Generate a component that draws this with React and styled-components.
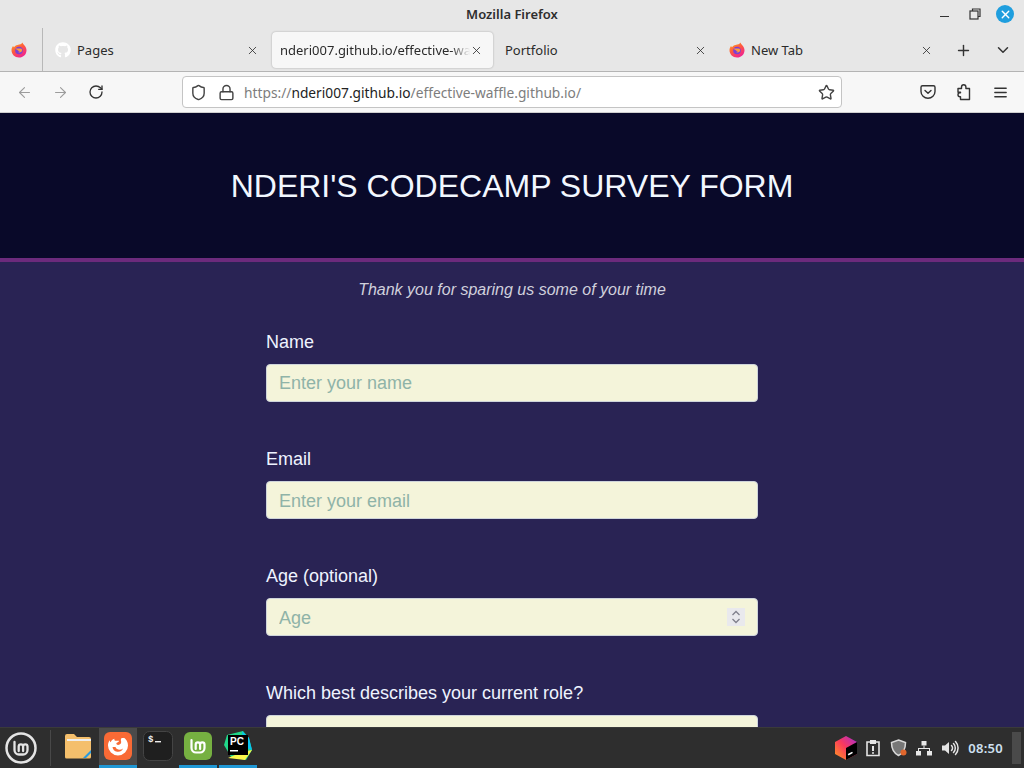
import React from 'react'
import styled, { createGlobalStyle } from 'styled-components'
import { FaGithub } from 'react-icons/fa'
import { LuArrowLeft, LuArrowRight, LuRotateCw, LuShield, LuLock, LuStar, LuPlus, LuChevronDown, LuX, LuMenu } from 'react-icons/lu'

const Global = createGlobalStyle`
  html, body { margin: 0; padding: 0; height: 100%; overflow: hidden; }
  * { box-sizing: border-box; }
`

const Screen = styled.div`
  width: 1024px;
  height: 768px;
  display: flex;
  flex-direction: column;
  overflow: hidden;
  font-family: "Noto Sans", sans-serif;
`

const TitleBar = styled.div`
  height: 28px;
  flex: none;
  background: #e7e7e7;
  display: flex;
  align-items: center;
  justify-content: center;
  position: relative;
  font-size: 13px;
  font-weight: 600;
  color: #2e2e2e;
`

const WindowButtons = styled.div`
  position: absolute;
  right: 10px;
  top: 5px;
  display: flex;
  align-items: center;
  color: #333;
`

const MinimizeBar = styled.div`
  width: 9px;
  height: 1px;
  margin: 5px 20px 0 0;
  background: #333;
`

const CloseDot = styled.div`
  width: 18px;
  height: 18px;
  margin-left: 15px;
  border-radius: 50%;
  background: #1f9ede;
  color: #fff;
  display: flex;
  align-items: center;
  justify-content: center;
`

const TabStrip = styled.div`
  height: 44px;
  flex: none;
  background: #e7e7e7;
  border-bottom: 1px solid #b4b4b4;
  display: flex;
  align-items: flex-start;
`

const PinnedTab = styled.div`
  width: 43px;
  height: 43px;
  flex: none;
  display: flex;
  align-items: center;
  justify-content: center;
  padding-right: 4px;
  padding-top: 1px;
  border-right: 1px solid #b8b8b8;
`

const Tab = styled.div`
  width: ${p => p.$w}px;
  flex: none;
  height: ${p => (p.$active ? 36 : 44)}px;
  margin: ${p => (p.$active ? '4px 0 0 3px' : '0')};
  padding: 0 10px 0 ${p => (p.$active ? 8 : 12)}px;
  display: flex;
  align-items: center;
  gap: ${p => (p.$active ? 0 : 6)}px;
  font-size: 13px;
  color: #2b2b2b;
  background: ${p => (p.$active ? '#f7f7f7' : 'transparent')};
  border-radius: ${p => (p.$active ? '4px' : '0')};
  box-shadow: ${p => (p.$active ? '0 0 2px rgba(0,0,0,.3)' : 'none')};
  svg { flex: none; }
`

const TabLabel = styled.span`
  flex: 1;
  min-width: 0;
  white-space: nowrap;
  mask-image: ${p => (p.$fade ? 'linear-gradient(to right, #000 90%, transparent)' : 'none')};
`

const StripButton = styled.div`
  width: 40px;
  height: 44px;
  flex: none;
  display: flex;
  align-items: center;
  justify-content: center;
  color: #333;
`

const NavBar = styled.div`
  height: 41px;
  flex: none;
  background: #f7f7f7;
  border-bottom: 1px solid #cfcfcf;
  display: flex;
  align-items: center;
  padding: 0 6px;
`

const NavButton = styled.div`
  width: 36px;
  height: 32px;
  flex: none;
  display: flex;
  align-items: center;
  justify-content: center;
  color: ${p => (p.$dim ? '#9c9c9c' : '#333')};
`

const UrlBar = styled.div`
  width: 660px;
  height: 32px;
  margin-left: 68px;
  margin-right: 68px;
  flex: none;
  background: #fff;
  border: 1px solid #c4c4c4;
  border-radius: 4px;
  display: flex;
  align-items: center;
  padding: 0 6px 0 7px;
  gap: 11px;
  color: #444;
  font-size: 13.75px;
`

const UrlText = styled.div`
  flex: 1;
  color: #7d7d7d;
  white-space: nowrap;
  margin-left: -2px;
  b { font-weight: 400; color: #222; }
`

const Page = styled.main`
  flex: 1;
  min-height: 0;
  overflow: hidden;
  background: #292354;
  font-family: "Liberation Sans", Arial, sans-serif;
`

const Header = styled.header`
  height: 149px;
  padding-top: 2px;
  background: #090929;
  border-bottom: 4px solid #6c2a7c;
  display: flex;
  align-items: center;
  justify-content: center;
`

const Title = styled.h1`
  margin: 0;
  font-size: 32px;
  font-weight: 400;
  color: #f2f7ff;
`

const Subtitle = styled.p`
  margin: 19px 0 0;
  text-align: center;
  font-size: 16px;
  line-height: 18px;
  font-style: italic;
  color: #d0d0dc;
`

const Form = styled.form`
  width: 492px;
  margin: 33px auto 0;
  display: flex;
  flex-direction: column;
  gap: 47px;
`

const Field = styled.div`
  display: flex;
  flex-direction: column;
  gap: 12px;
  position: relative;
`

const Label = styled.label`
  font-size: 18px;
  line-height: 20px;
  color: #eef3ff;
`

const Input = styled.input`
  width: 100%;
  height: 38px;
  padding: ${p => (p.$low ? '2px' : '0')} 12px 0;
  font-family: inherit;
  font-size: 18px;
  background: #f4f4da;
  border: 1px solid #ced4da;
  border-radius: 4px;
  outline: none;
  &::placeholder { color: #8fb3a8; opacity: 1; }
`

const SpinBox = styled.div`
  position: absolute;
  right: 13px;
  bottom: 10px;
  width: 18px;
  height: 18px;
  background: #e9e9ed;
  display: flex;
  align-items: center;
  justify-content: center;
`

const Taskbar = styled.div`
  height: 41px;
  flex: none;
  background: #2e2e2e;
  border-top: 1px solid #3a3a3a;
  display: flex;
  align-items: stretch;
`

const MenuButton = styled.div`
  width: 51px;
  flex: none;
  border-right: 1px solid #484848;
  display: flex;
  align-items: center;
  justify-content: center;
  padding-right: 8px;
  margin: 2px 0;
`

const Launcher = styled.div`
  display: flex;
  gap: 2px;
  margin-left: 8px;
`

const Launch = styled.div`
  width: 38px;
  display: flex;
  align-items: center;
  justify-content: center;
  padding-bottom: 1px;
  background: ${p => (p.$active ? '#4a4a4a' : 'transparent')};
  border-bottom: 3px solid ${p => (p.$running ? '#1f97d4' : 'transparent')};
`

const Tray = styled.div`
  margin-left: auto;
  display: flex;
  align-items: center;
  padding-right: 3px;
`

const TraySlot = styled.div`
  width: ${p => p.$w}px;
  display: flex;
  align-items: center;
  justify-content: center;
`

const Clock = styled.div`
  font-size: 13px;
  font-weight: 600;
  color: #cfe0f0;
  margin: 0 9px 0 5px;
  letter-spacing: .3px;
`

const ShowDesktop = styled.div`
  width: 9px;
  height: 32px;
  background: #4a4a4a;
`

const FirefoxLogo = ({ size = 16 }) => (
  <svg width={size} height={size} viewBox="0 0 16 16">
    <defs>
      <linearGradient id="ffa" x1="0" y1="0" x2="0.6" y2="1">
        <stop offset="0" stopColor="#ffb020" />
        <stop offset="0.5" stopColor="#ff5a3c" />
        <stop offset="1" stopColor="#f0258f" />
      </linearGradient>
    </defs>
    <path d="M11.5 .6c.3 1.200 1 1.600 1.800 2.600 1.500 1.700 2.200 3.300 2.200 5 0 4.200-3.300 7.300-7.500 7.300S.5 12.400 .5 8.300c0-1.600.6-3.200 1.500-4.300l1 1.300C3.800 4 5 3.100 6.500 2.900c2.300-.2 4.200-.7 5-2.300z" fill="url(#ffa)" />
    <circle cx="8" cy="8.500" r="3.800" fill="#7b3fd6" />
    <path d="M4.500 6.500h5.500c1.300.4 1.600 2.500.2 3.500-1 .7-2.600.6-3.500-.2 1 .3 2 0 2.400-.7-.8.300-2.400-.2-2.400-1-.8-.2-1.700-.8-2.200-1.600z" fill="#ff9a3c" />
  </svg>
)

const Pocket = () => (
  <svg width="16" height="16" viewBox="0 0 16 16" fill="none" stroke="#333" strokeWidth="1.400" strokeLinecap="round" strokeLinejoin="round">
    <path d="M2.500 1.800h11A1.500 1.500 0 0 1 15 3.300V7.500a7 6.800 0 0 1-14 0V3.300A1.500 1.500 0 0 1 2.500 1.800z" />
    <path d="M5 6.500l3 2.800 3-2.800" />
  </svg>
)

const Extensions = () => (
  <svg width="16" height="18" viewBox="0 0 16 18" fill="none" stroke="#333" strokeWidth="1.400" strokeLinejoin="round">
    <path d="M2 5.500h3.500V4a2.200 2.200 0 0 1 4.400 0v1.500h3.600v11H4.500v-2.800H4a2 2 0 0 1 0-4h.5V9.200H2z" />
  </svg>
)

const Volume = () => (
  <svg width="18" height="18" viewBox="0 0 18 18" fill="none" stroke="#e4e4e4" strokeWidth="1.500" strokeLinecap="round">
    <path d="M1 6.500h3L8 3v12l-4-3.500H1z" fill="#e4e4e4" stroke="none" />
    <path d="M10.500 6.500a3.500 3.500 0 0 1 0 5M12.500 4.500a6.500 6.500 0 0 1 0 9M14.500 2.500a9.500 9.500 0 0 1 0 13" />
  </svg>
)

const MINT_PATH = 'M3.500 4v8a4.500 4.500 0 0 0 4.500 4.500h4a4.500 4.500 0 0 0 4.500-4.500V8.500a2.200 2.200 0 0 0-4.400 0V13M12.100 8.500a2.200 2.200 0 0 0-4.400 0V13'

const Folder = () => (
  <svg width="28" height="26" viewBox="0 0 28 26">
    <path d="M1 3a2 2 0 0 1 2-2h7l3 3h12a2 2 0 0 1 2 2v18a1.500 1.500 0 0 1-1.500 1.500H2.500A1.500 1.500 0 0 1 1 24z" fill="#f4bf6c" />
    <rect x="3" y="6" width="24" height="2" fill="#eee" />
    <path d="M19 25l8-8v3l-5 5z" fill="#2a9be0" />
  </svg>
)

const FirefoxApp = () => (
  <svg width="28" height="28" viewBox="0 0 28 28">
    <rect width="28" height="28" rx="6" fill="#f96a35" />
    <path d="M19 5c3.500 2 5 5 5 8.500a10 10 0 0 1-20 0c0-2 .6-3.800 1.600-5.300.2 1 .6 1.600 1.200 2.100.4-1.700 1.800-3 3.700-3.500-.4 1 0 1.700.8 2h3.700c.2.900-1.400 1.700-2.500 2.300-.5.800.2 1.800 1.700 1.800 2.200 0 3.400-1.800 2.900-3.600-.4-1.500-.7-2.800 2-4.300z" fill="#fff" />
    <path d="M8.500 15a5.500 5.500 0 0 0 10.500 1.500c-2.500 2-6.500 1.600-7.500-1.500z" fill="#f96a35" />
  </svg>
)

const Terminal = () => (
  <svg width="30" height="30" viewBox="0 0 30 30">
    <rect x=".5" y=".5" width="29" height="29" rx="6" fill="#1f1f1f" stroke="#444" />
    <text x="5" y="11" fontSize="9" fontWeight="700" fontFamily="Liberation Mono, monospace" fill="#eee">$</text>
    <rect x="12" y="10" width="6" height="1.400" fill="#eee" />
  </svg>
)

const MintApp = () => (
  <svg width="28" height="28" viewBox="0 0 28 28">
    <rect width="28" height="28" rx="6" fill="#76b041" />
    <g transform="translate(4 4)">
      <path d={MINT_PATH} fill="none" stroke="#fff" strokeWidth="2.200" strokeLinecap="round" />
    </g>
  </svg>
)

const Pycharm = () => (
  <svg width="32" height="32" viewBox="0 0 32 32">
    <path d="M5 5l16-4 6 7 3 12-6 10-15-3-7-12z" fill="#21d789" />
    <path d="M20 1l7 7 3 12-8-3z" fill="#07c3f2" />
    <path d="M6 28l17 2 7-10-10 2z" fill="#fcf84a" />
    <rect x="6" y="5" width="20" height="20" fill="#000" />
    <text x="8" y="15" fontSize="10" fontWeight="700" fontFamily="Liberation Sans, sans-serif" fill="#fff">PC</text>
    <rect x="8" y="20" width="8" height="1.500" fill="#fff" />
  </svg>
)

const Toolbox = () => (
  <svg width="24" height="26" viewBox="0 0 24 26">
    <defs>
      <linearGradient id="tba" x1="0" y1="1" x2="1" y2="0">
        <stop offset="0" stopColor="#ff9a1f" />
        <stop offset=".5" stopColor="#fa3a5c" />
        <stop offset="1" stopColor="#a52bd6" />
      </linearGradient>
    </defs>
    <path d="M12 1l11 6v12l-11 6-11-6V7z" fill="url(#tba)" />
    <path d="M12 13l11-6v12l-11 6z" fill="#000" />
    <rect x="14" y="18" width="5" height="1.500" fill="#fff" transform="rotate(-28 16 19)" />
  </svg>
)

const ClipAlert = () => (
  <svg width="16" height="18" viewBox="0 0 16 18" fill="none" stroke="#e4e4e4" strokeWidth="1.600">
    <path d="M5 3H2v13.500h12V3h-3" />
    <rect x="5" y="1" width="6" height="4" fill="#e4e4e4" stroke="none" />
    <path d="M8 7v5M8 13.200v1.500" strokeWidth="2" />
  </svg>
)

const ShieldAlert = () => (
  <svg width="18" height="18" viewBox="0 0 18 18">
    <path d="M8.500 1l7 2.500c0 5-1 10-7 13-6-3-7-8-7-13z" fill="#777" stroke="#d8d8d8" strokeWidth="1.500" />
    <circle cx="13.500" cy="13.500" r="3" fill="#e0662c" />
  </svg>
)

const Network = () => (
  <svg width="16" height="16" viewBox="0 0 16 16" fill="#e8e8e8">
    <rect x="5.500" y="1" width="5" height="4.500" />
    <rect x="0" y="11" width="5" height="4.500" />
    <rect x="11" y="11" width="5" height="4.500" />
    <path d="M7.500 5.500h1V8H14v3h-1V9H3v2H2V8h5.500z" />
  </svg>
)

const Chevrons = () => (
  <svg width="12" height="16" viewBox="0 0 12 16" fill="none" stroke="#80808c" strokeWidth="1.300">
    <path d="M2.500 6l3.500-3.500L9.500 6M2.500 10l3.500 3.500L9.500 10" />
  </svg>
)

const GitHubMark = styled(FaGithub)`
  color: #fff;
  flex: none;
`

export default function App() {
  return (
    <Screen>
      <Global />
      <TitleBar>
        Mozilla Firefox
        <WindowButtons>
          <MinimizeBar />
          <svg width="12" height="12" viewBox="0 0 12 12" fill="none" stroke="#333" strokeWidth="1.200">
            <rect x="1" y="3" width="8" height="8" />
            <path d="M3.500 3V1h7.500v7.500H9" />
          </svg>
          <CloseDot><LuX size={13} strokeWidth={2.500} /></CloseDot>
        </WindowButtons>
      </TitleBar>
      <TabStrip>
        <PinnedTab><FirefoxLogo /></PinnedTab>
        <Tab $w={226}>
          <GitHubMark size={16} />
          <TabLabel>Pages</TabLabel>
          <LuX size={13} strokeWidth={1.500} />
        </Tab>
        <Tab $w={221} $active>
          <TabLabel $fade>nderi007.github.io/effective-wa</TabLabel>
          <LuX size={13} strokeWidth={1.500} />
        </Tab>
        <Tab $w={224}>
          <TabLabel>Portfolio</TabLabel>
          <LuX size={13} strokeWidth={1.500} />
        </Tab>
        <Tab $w={226}>
          <FirefoxLogo />
          <TabLabel>New Tab</TabLabel>
          <LuX size={13} strokeWidth={1.500} />
        </Tab>
        <StripButton><LuPlus size={17} /></StripButton>
        <StripButton><LuChevronDown size={18} /></StripButton>
      </TabStrip>
      <NavBar>
        <NavButton $dim><LuArrowLeft size={17} strokeWidth={1.500} /></NavButton>
        <NavButton $dim><LuArrowRight size={17} strokeWidth={1.500} /></NavButton>
        <NavButton><LuRotateCw size={16} /></NavButton>
        <UrlBar>
          <LuShield size={17} />
          <LuLock size={17} />
          <UrlText>https://<b>nderi007.github.io</b>/effective-waffle.github.io/</UrlText>
          <LuStar size={17} />
        </UrlBar>
        <NavButton><Pocket /></NavButton>
        <NavButton><Extensions /></NavButton>
        <NavButton><LuMenu size={17} /></NavButton>
      </NavBar>
      <Page>
        <Header>
          <Title>NDERI'S CODECAMP SURVEY FORM</Title>
        </Header>
        <Subtitle>Thank you for sparing us some of your time</Subtitle>
        <Form>
          <Field>
            <Label>Name</Label>
            <Input placeholder="Enter your name" />
          </Field>
          <Field>
            <Label>Email</Label>
            <Input $low placeholder="Enter your email" />
          </Field>
          <Field>
            <Label>Age (optional)</Label>
            <Input $low placeholder="Age" />
            <SpinBox><Chevrons /></SpinBox>
          </Field>
          <Field>
            <Label>Which best describes your current role?</Label>
            <Input />
          </Field>
        </Form>
      </Page>
      <Taskbar>
        <MenuButton>
          <svg width="32" height="32" viewBox="0 0 32 32" fill="none">
            <circle cx="16" cy="16" r="14.500" stroke="#e4e4e4" strokeWidth="2.500" />
            <g transform="translate(6 6)">
              <path d={MINT_PATH} stroke="#e4e4e4" strokeWidth="2.300" strokeLinecap="round" />
            </g>
          </svg>
        </MenuButton>
        <Launcher>
          <Launch><Folder /></Launch>
          <Launch $active $running><FirefoxApp /></Launch>
          <Launch><Terminal /></Launch>
          <Launch $running><MintApp /></Launch>
          <Launch $running><Pycharm /></Launch>
        </Launcher>
        <Tray>
          <TraySlot $w={28}><Toolbox /></TraySlot>
          <TraySlot $w={26}><ClipAlert /></TraySlot>
          <TraySlot $w={25}><ShieldAlert /></TraySlot>
          <TraySlot $w={26}><Network /></TraySlot>
          <TraySlot $w={26}><Volume /></TraySlot>
          <Clock>08:50</Clock>
          <ShowDesktop />
        </Tray>
      </Taskbar>
    </Screen>
  )
}
